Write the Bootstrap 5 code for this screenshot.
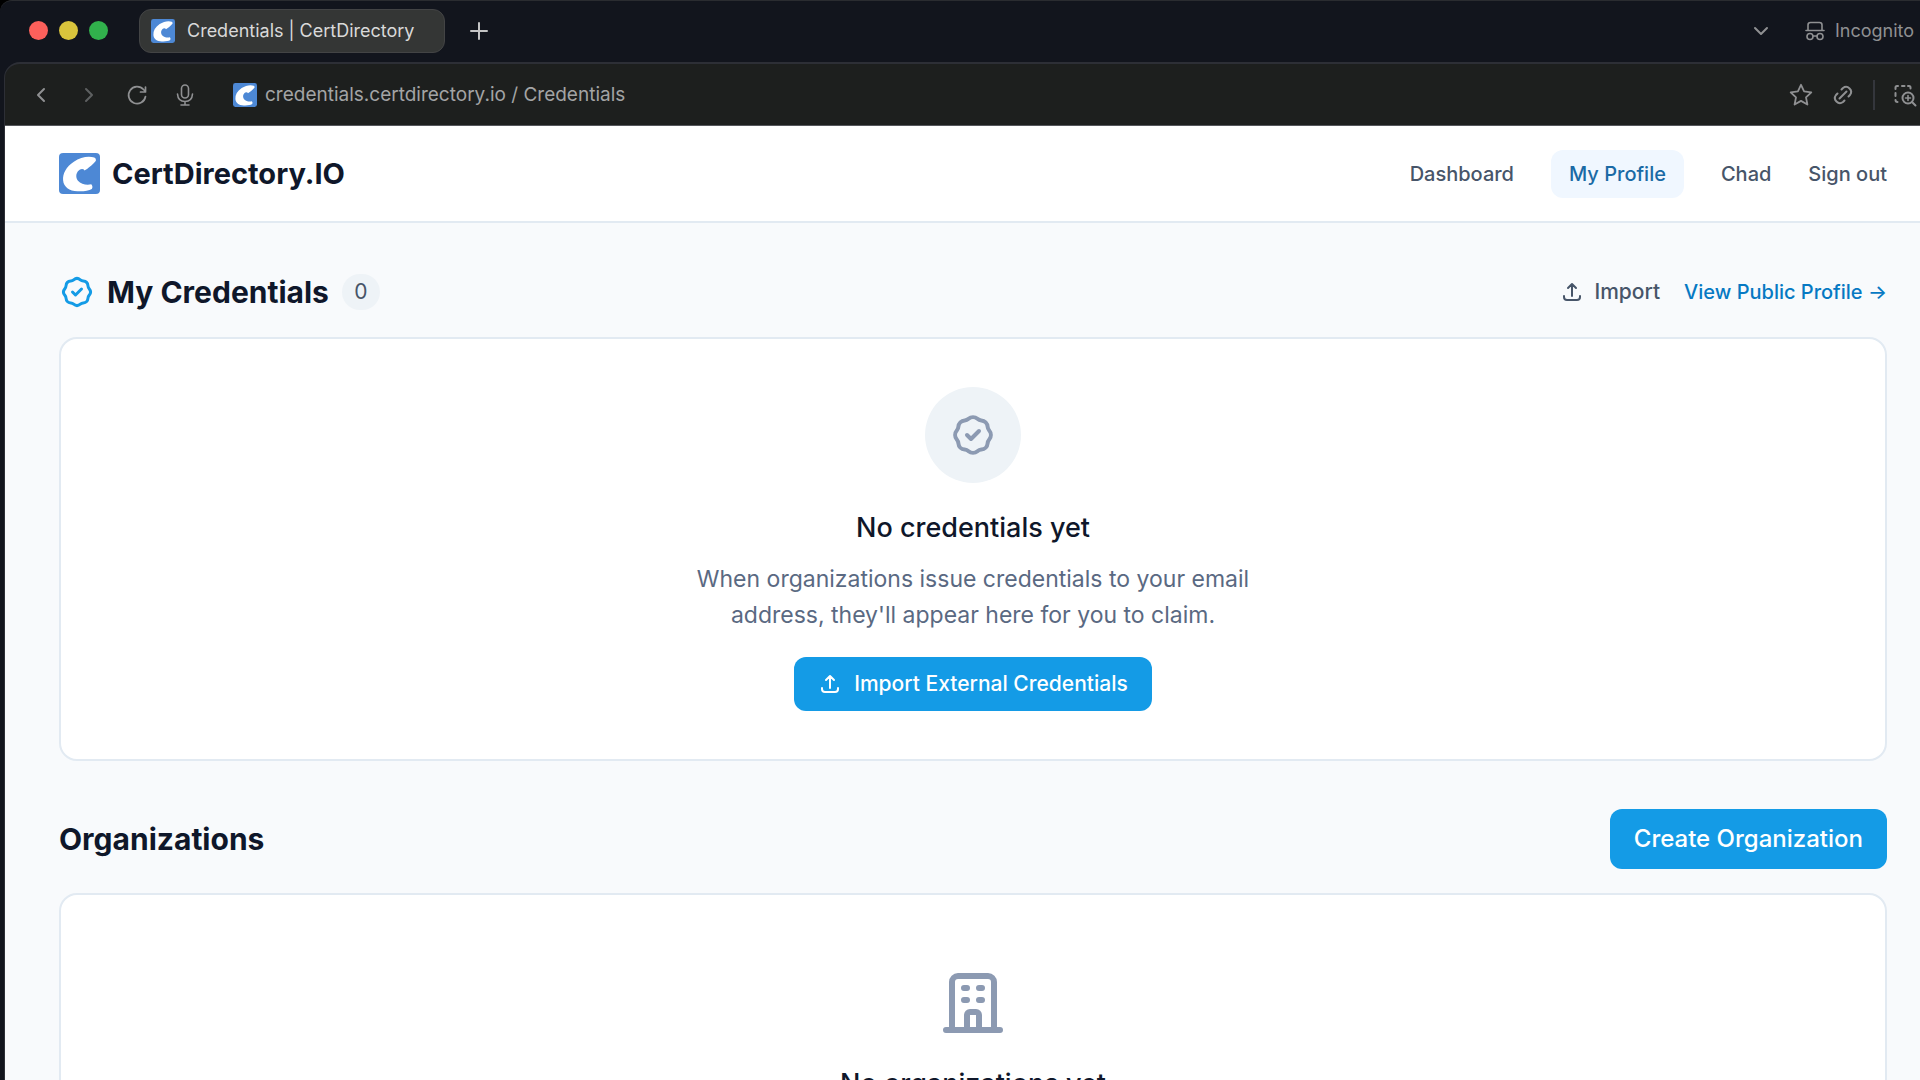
<!DOCTYPE html>
<html lang="en">
<head>
<meta charset="utf-8">
<meta name="viewport" content="width=device-width, initial-scale=1">
<title>Credentials | CertDirectory</title>
<link href="https://cdn.jsdelivr.net/npm/bootstrap@5.3.0/dist/css/bootstrap.min.css" rel="stylesheet">
<style>
  body { background: #000; color: #0f172a; font-family: Inter, "Liberation Sans", sans-serif; }
  button { font-family: inherit; }
  svg { flex: none; }
  .line-icon { fill: none; stroke: currentColor; stroke-width: 2; stroke-linecap: round; stroke-linejoin: round; }

  /* browser chrome */
  .browser { background: #12151d; border-top: 1px solid #2a2c30; border-radius: 12px 0 0 0; }
  .chrome { font-size: 19px; line-height: 28px; color: #8f9092; }
  .chrome button { background: none; border: 0; padding: 0; color: inherit; display: flex; }
  .tabstrip { height: 61px; padding: 0 6px 2px 29px; font-size: 18px; }
  .lights { gap: 11px; }
  .light { width: 19px; height: 19px; border-radius: 50%; }
  .light-red { background: #fc605b; }
  .light-yellow { background: #d9c43c; }
  .light-green { background: #31b14c; }
  .browser-tab { width: 306px; height: 44px; margin-left: 31px; padding: 0 11px; border-radius: 12px; background: #343635; border: 1px solid #434445; color: #d9d9d9; }
  .pane { margin-left: 4px; border: 2px solid #2d2f36; border-width: 2px 0 0 1px; border-radius: 16px 0 0 0; background: #1d1f1e; }
  .toolbar { height: 62px; padding: 0 3px 0 24px; border-bottom: 1px solid #55575c; }
  .tool-group { gap: 24px; }
  .tool-end { gap: 18px; }
  .tool-divider { width: 2px; height: 30px; background: #34363c; }
  .address { color: #a3a4a5; }

  /* site */
  .site { background: #f8fafc; }
  .site-header { height: 97px; padding: 0 33px 0 54px; background: #fff; border-bottom: 2px solid #e2eaf2; }
  .brand { font-size: 29px; line-height: 40px; font-weight: 700; color: #0f172a; text-decoration: none; }
  .site-nav { font-size: 20px; line-height: 30px; font-weight: 500; gap: 37px; }
  .site-nav a, .site-nav button { color: #475569; text-decoration: none; background: none; border: 0; padding: 0; font-weight: 500; }
  .site-nav a.current { background: #f0f7ff; color: #1a6aa5; border-radius: 12px; padding: 9px 18px; }
  .site-main { padding: 48px 33px 48px 54px; }
  .section-title { font-size: 30px; line-height: 42px; font-weight: 700; }
  .count { min-width: 38px; height: 36px; margin-left: 13px; border-radius: 18px; background: #eef3f7; color: #475569; font-size: 21px; line-height: 36px; text-align: center; }
  .section-action { font-size: 20px; line-height: 30px; font-weight: 500; }
  .import-link { background: none; border: 0; padding: 0; color: #475569; font-size: 21px; font-weight: 500; gap: 10px; }
  .profile-link { color: #0679c3; text-decoration: none; }
  .panel { background: #fff; border: 2px solid #e2eaf2; border-radius: 18px; }
  .badge-disc { width: 96px; height: 96px; border-radius: 50%; background: #eef3f7; }
  .brand-icon { color: #149be6; }
  .muted-icon { color: #8c9ab2; }
  .empty-title { font-size: 27px; line-height: 42px; font-weight: 500; margin-bottom: 12px; }
  .empty-text { max-width: 620px; font-size: 23px; line-height: 36px; color: #5a6982; }
  .action { background: #149be6; color: #fff; border: 0; border-radius: 12px; font-weight: 500; }
  .action:hover { background: #0284c7; color: #fff; }
  .action-md { height: 54px; padding: 0 24px; font-size: 21px; gap: 12px; }
  .action-lg { height: 60px; padding: 0 24px; font-size: 24px; line-height: 36px; }
</style>
</head>
<body class="vh-100 overflow-hidden">
<svg class="d-none">
  <symbol id="logo" viewBox="0 0 40 40">
    <rect width="40" height="40" rx="4" fill="#4d88d5"/>
    <path d="M34.500 4.500C29 2.500 21 4 14.500 8.500C7 13.500 3.500 20 4 26.500C4.500 33 10 37 18 37.300C24 37.500 29 37 32 35Q33.500 33 31.500 30.500C27 31.500 21.500 30.500 18.500 27C15.500 23 17 18 20.500 16Q23.500 14.800 25 17C27.500 15.500 33 11.500 36 7.500Q36.500 5.500 34.500 4.500Z" fill="#fff"/>
  </symbol>
  <symbol id="check-badge" viewBox="0 0 24 24">
    <path d="M9 12l2 2 4-4M7.835 4.697a3.42 3.42 0 001.946-.806 3.42 3.42 0 014.438 0 3.42 3.42 0 001.946.806 3.42 3.42 0 013.138 3.138 3.42 3.42 0 00.806 1.946 3.42 3.42 0 010 4.438 3.42 3.42 0 00-.806 1.946 3.42 3.42 0 01-3.138 3.138 3.42 3.42 0 00-1.946.806 3.42 3.42 0 01-4.438 0 3.42 3.42 0 00-1.946-.806 3.42 3.42 0 01-3.138-3.138 3.42 3.42 0 00-.806-1.946 3.42 3.42 0 010-4.438 3.42 3.42 0 00.806-1.946 3.42 3.42 0 013.138-3.138z"/>
  </symbol>
  <symbol id="upload" viewBox="0 0 24 24"><path d="M4 16v1a3 3 0 003 3h10a3 3 0 003-3v-1m-4-8l-4-4m0 0L8 8m4-4v12"/></symbol>
</svg>

<div class="browser d-flex flex-column min-vh-100">
  <div class="chrome tabstrip d-flex align-items-center">
    <div class="lights d-flex">
      <span class="light light-red"></span><span class="light light-yellow"></span><span class="light light-green"></span>
    </div>
    <div class="browser-tab d-flex align-items-center gap-2">
      <svg width="24" height="24"><use href="#logo"/></svg>
      <span class="text-nowrap ms-1">Credentials | CertDirectory</span>
    </div>
    <button type="button" class="ms-4" aria-label="New tab"><svg class="line-icon" width="20" height="20" viewBox="0 0 20 20"><path d="M10 2v16M2 10h16" stroke="#c4c4c5"/></svg></button>
    <button type="button" class="ms-auto me-4" aria-label="Search tabs"><svg class="line-icon" width="20" height="20" viewBox="0 0 20 20"><path d="M4 7l6 6 6-6"/></svg></button>
    <span class="d-flex align-items-center ms-2 gap-2">
      <svg class="line-icon" width="24" height="24" viewBox="0 0 24 24"><g stroke-width="1.600"><path d="M3 11.500h18M5 11V6q0-2.500 2.500-2.500h9Q19 3.500 19 6v5"/><circle cx="7" cy="17.500" r="3"/><circle cx="17" cy="17.500" r="3"/><path d="M10 17h4"/></g></svg>
      <span>Incognito</span>
    </span>
  </div>

  <div class="pane flex-grow-1 d-flex flex-column overflow-hidden">
    <div class="chrome toolbar d-flex align-items-center">
      <div class="tool-group d-flex">
        <button type="button" aria-label="Back"><svg class="line-icon" width="24" height="24" viewBox="0 0 24 24"><path d="M15 6l-6 6 6 6"/></svg></button>
        <button type="button" aria-label="Forward"><svg class="line-icon" width="24" height="24" viewBox="0 0 24 24"><path d="M9 6l6 6-6 6" stroke="#5e6061"/></svg></button>
        <button type="button" aria-label="Reload"><svg class="line-icon" width="24" height="24" viewBox="0 0 24 24"><path stroke-width="1.700" d="M20.500 13.500A8.500 8.500 0 1 1 18.500 6.500L20.500 8.500M20.500 4v5h-5"/></svg></button>
        <button type="button" aria-label="Voice search"><svg class="line-icon" width="24" height="24" viewBox="0 0 24 24"><g stroke-width="1.600"><rect x="8.500" y="2" width="7" height="13" rx="3.500"/><path d="M4.500 11q.5 7.500 7.500 7.500t7.500-7.500M12 18.500V22M8 22h8"/></g></svg></button>
      </div>
      <a href="#" class="address d-flex align-items-center text-decoration-none ms-4 ps-2">
        <svg class="ms-1" width="24" height="24"><use href="#logo"/></svg>
        <span class="text-nowrap ms-2">credentials.certdirectory.io / Credentials</span>
      </a>
      <div class="tool-end d-flex align-items-center ms-auto">
        <button type="button" aria-label="Bookmark"><svg class="line-icon" width="24" height="24" viewBox="0 0 24 24"><path stroke-width="1.800" d="M12 1.800l3.100 6.600 7.200.9-5.300 5 1.400 7.200-6.400-3.600-6.400 3.600 1.400-7.200-5.300-5 7.200-.9z"/></svg></button>
        <button type="button" aria-label="Copy link"><svg class="line-icon" width="24" height="24" viewBox="0 0 24 24"><path d="M8.500 15.500l7-7M10.500 6.500l1.500-1.500a5 5 0 0 1 7 7l-1.500 1.500M13.500 17.500L12 19a5 5 0 0 1-7-7l1.500-1.500"/></svg></button>
        <span class="tool-divider"></span>
        <button type="button" aria-label="Search image"><svg class="line-icon" width="24" height="24" viewBox="0 0 24 24"><path d="M2.500 6V4.500q0-1.500 1.500-1.500h1M9 3h2.500M15 3h1q1.500 0 1.500 1.500v1M2.500 10v3M2.500 17q0 2 2 2M19 19l3.500 3.500"/><circle cx="15" cy="15" r="5.500"/><path stroke-width="1.600" d="M12.500 15h5M15 12.500v5"/></svg></button>
      </div>
    </div>

    <div class="site flex-grow-1">
      <header class="site-header d-flex align-items-center justify-content-between">
        <a class="brand d-flex align-items-center gap-2" href="#">
          <svg width="41" height="41"><use href="#logo"/></svg>
          <span class="ms-1">CertDirectory.IO</span>
        </a>
        <nav class="site-nav d-flex align-items-center">
          <a href="#">Dashboard</a>
          <a href="#" class="current" aria-current="page">My Profile</a>
          <a href="#">Chad</a>
          <button type="button">Sign out</button>
        </nav>
      </header>

      <main class="site-main">
        <section>
          <div class="d-flex align-items-center justify-content-between">
            <div class="d-flex align-items-center">
              <svg class="line-icon brand-icon me-2" width="36" height="36"><use href="#check-badge"/></svg>
              <h1 class="section-title mb-0 ms-1">My Credentials</h1>
              <span class="count">0</span>
            </div>
            <div class="section-action d-flex align-items-center gap-4">
              <button type="button" class="import-link d-flex align-items-center"><svg class="line-icon" width="24" height="24"><use href="#upload"/></svg>Import</button>
              <a href="#" class="profile-link">View Public Profile →</a>
            </div>
          </div>
          <div class="panel d-flex flex-column align-items-center text-center mt-4 p-5">
            <span class="badge-disc d-flex align-items-center justify-content-center"><svg class="line-icon muted-icon" width="48" height="48"><use href="#check-badge"/></svg></span>
            <h2 class="empty-title mt-4">No credentials yet</h2>
            <p class="empty-text mb-4">When organizations issue credentials to your email address, they'll appear here for you to claim.</p>
            <button type="button" class="btn action action-md d-flex align-items-center"><svg class="line-icon" width="24" height="24"><use href="#upload"/></svg>Import External Credentials</button>
          </div>
        </section>

        <section class="mt-5">
          <div class="d-flex align-items-center justify-content-between">
            <h1 class="section-title mb-0">Organizations</h1>
            <button type="button" class="btn action action-lg">Create Organization</button>
          </div>
          <div class="panel d-flex flex-column align-items-center text-center mt-4 p-5">
            <svg class="line-icon muted-icon mt-4" width="72" height="72" viewBox="0 0 24 24"><path d="M19 21V5a2 2 0 00-2-2H7a2 2 0 00-2 2v16m14 0h2m-2 0h-5m-9 0H3m2 0h5M9 7h1m-1 4h1m4-4h1m-1 4h1m-5 10v-5a1 1 0 011-1h2a1 1 0 011 1v5m-4 0h4"/></svg>
            <h2 class="empty-title mt-4">No organizations yet</h2>
          </div>
        </section>
      </main>
    </div>
  </div>
</div>
<script src="https://cdn.jsdelivr.net/npm/bootstrap@5.3.0/dist/js/bootstrap.bundle.min.js"></script>
</body>
</html>
